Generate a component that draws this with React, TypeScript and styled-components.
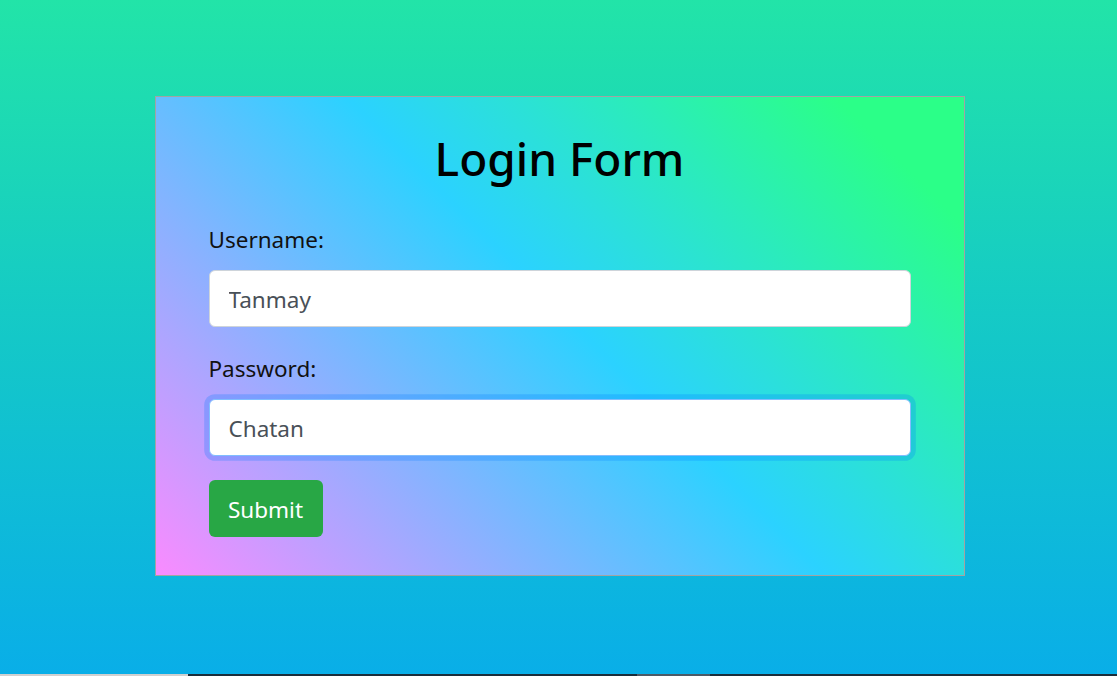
import React from "react";
import styled, { createGlobalStyle } from "styled-components";

const GlobalStyle = createGlobalStyle`
  html, body {
    margin: 0;
    padding: 0;
    height: 100%;
  }
  body {
    font-family: "Noto Sans", "Open Sans", "Liberation Sans", sans-serif;
    color: #212529;
  }
  * { box-sizing: border-box; }
`;

const Page = styled.div`
  height: 676px;
  display: flex;
  flex-direction: column;
  background: linear-gradient(180deg, #22e4a8 0%, #14c8c8 50%, #09aee8 100%);
`;

const Main = styled.main`
  flex: 1;
  display: flex;
  justify-content: center;
  padding: 96px 0 0 2px;
`;

const Card = styled.form`
  width: 810px;
  height: 480px;
  border: 1px solid #a3a3a3;
  background: linear-gradient(45deg, #fa8bff 0%, #2bd2ff 52%, #2bff88 90%);
  padding: 33px 53px 0 53px;
  display: flex;
  flex-direction: column;
`;

const Title = styled.h2`
  margin: 0 0 34px 0;
  font-size: 46px;
  font-weight: 500;
  line-height: 57.6px;
  text-align: center;
  color: #000;
`;

const Group = styled.div`
  display: flex;
  flex-direction: column;
  margin-bottom: 24px;
`;

const Label = styled.label`
  font-size: 22.5px;
  line-height: 36px;
  margin-bottom: 12px;
  color: #111;
`;

const Input = styled.input<{ $focused?: boolean }>`
  height: 57px;
  width: 100%;
  border: 1.5px solid ${(p) => (p.$focused ? "#80bdff" : "#ced4da")};
  border-radius: 6px;
  padding: 3px 19px 0;
  font-family: inherit;
  font-size: 22.5px;
  color: #495057;
  background: #fff;
  outline: none;
  box-shadow: ${(p) => (p.$focused ? "0 0 0 4.8px rgba(0, 123, 255, 0.25)" : "none")};
`;

const Button = styled.button`
  align-self: flex-start;
  height: 57px;
  width: 114px;
  border: none;
  border-radius: 6px;
  background: #28a745;
  color: #fff;
  font-family: inherit;
  font-size: 22.5px;
  padding: 3px 0 0;
  cursor: pointer;
`;

const Strip = styled.div`
  height: 2px;
  display: flex;
`;

const StripPart = styled.div<{ $w?: number; $c: string }>`
  background: ${(p) => p.$c};
  ${(p) => (p.$w ? `width: ${p.$w}px;` : "flex: 1;")}
`;

export default function App() {
  return (
    <>
      <GlobalStyle />
      <Page>
        <Main>
          <Card onSubmit={(e) => e.preventDefault()}>
            <Title>Login Form</Title>
            <Group>
              <Label htmlFor="username">Username:</Label>
              <Input id="username" defaultValue="Tanmay" />
            </Group>
            <Group>
              <Label htmlFor="password">Password:</Label>
              <Input id="password" defaultValue="Chatan" $focused />
            </Group>
            <Button type="submit">Submit</Button>
          </Card>
        </Main>
        <Strip>
          <StripPart $w={188} $c="#d0d0d0" />
          <StripPart $w={449} $c="#1b2d3a" />
          <StripPart $w={73} $c="#4c5a66" />
          <StripPart $c="#1b2d3a" />
        </Strip>
      </Page>
    </>
  );
}
